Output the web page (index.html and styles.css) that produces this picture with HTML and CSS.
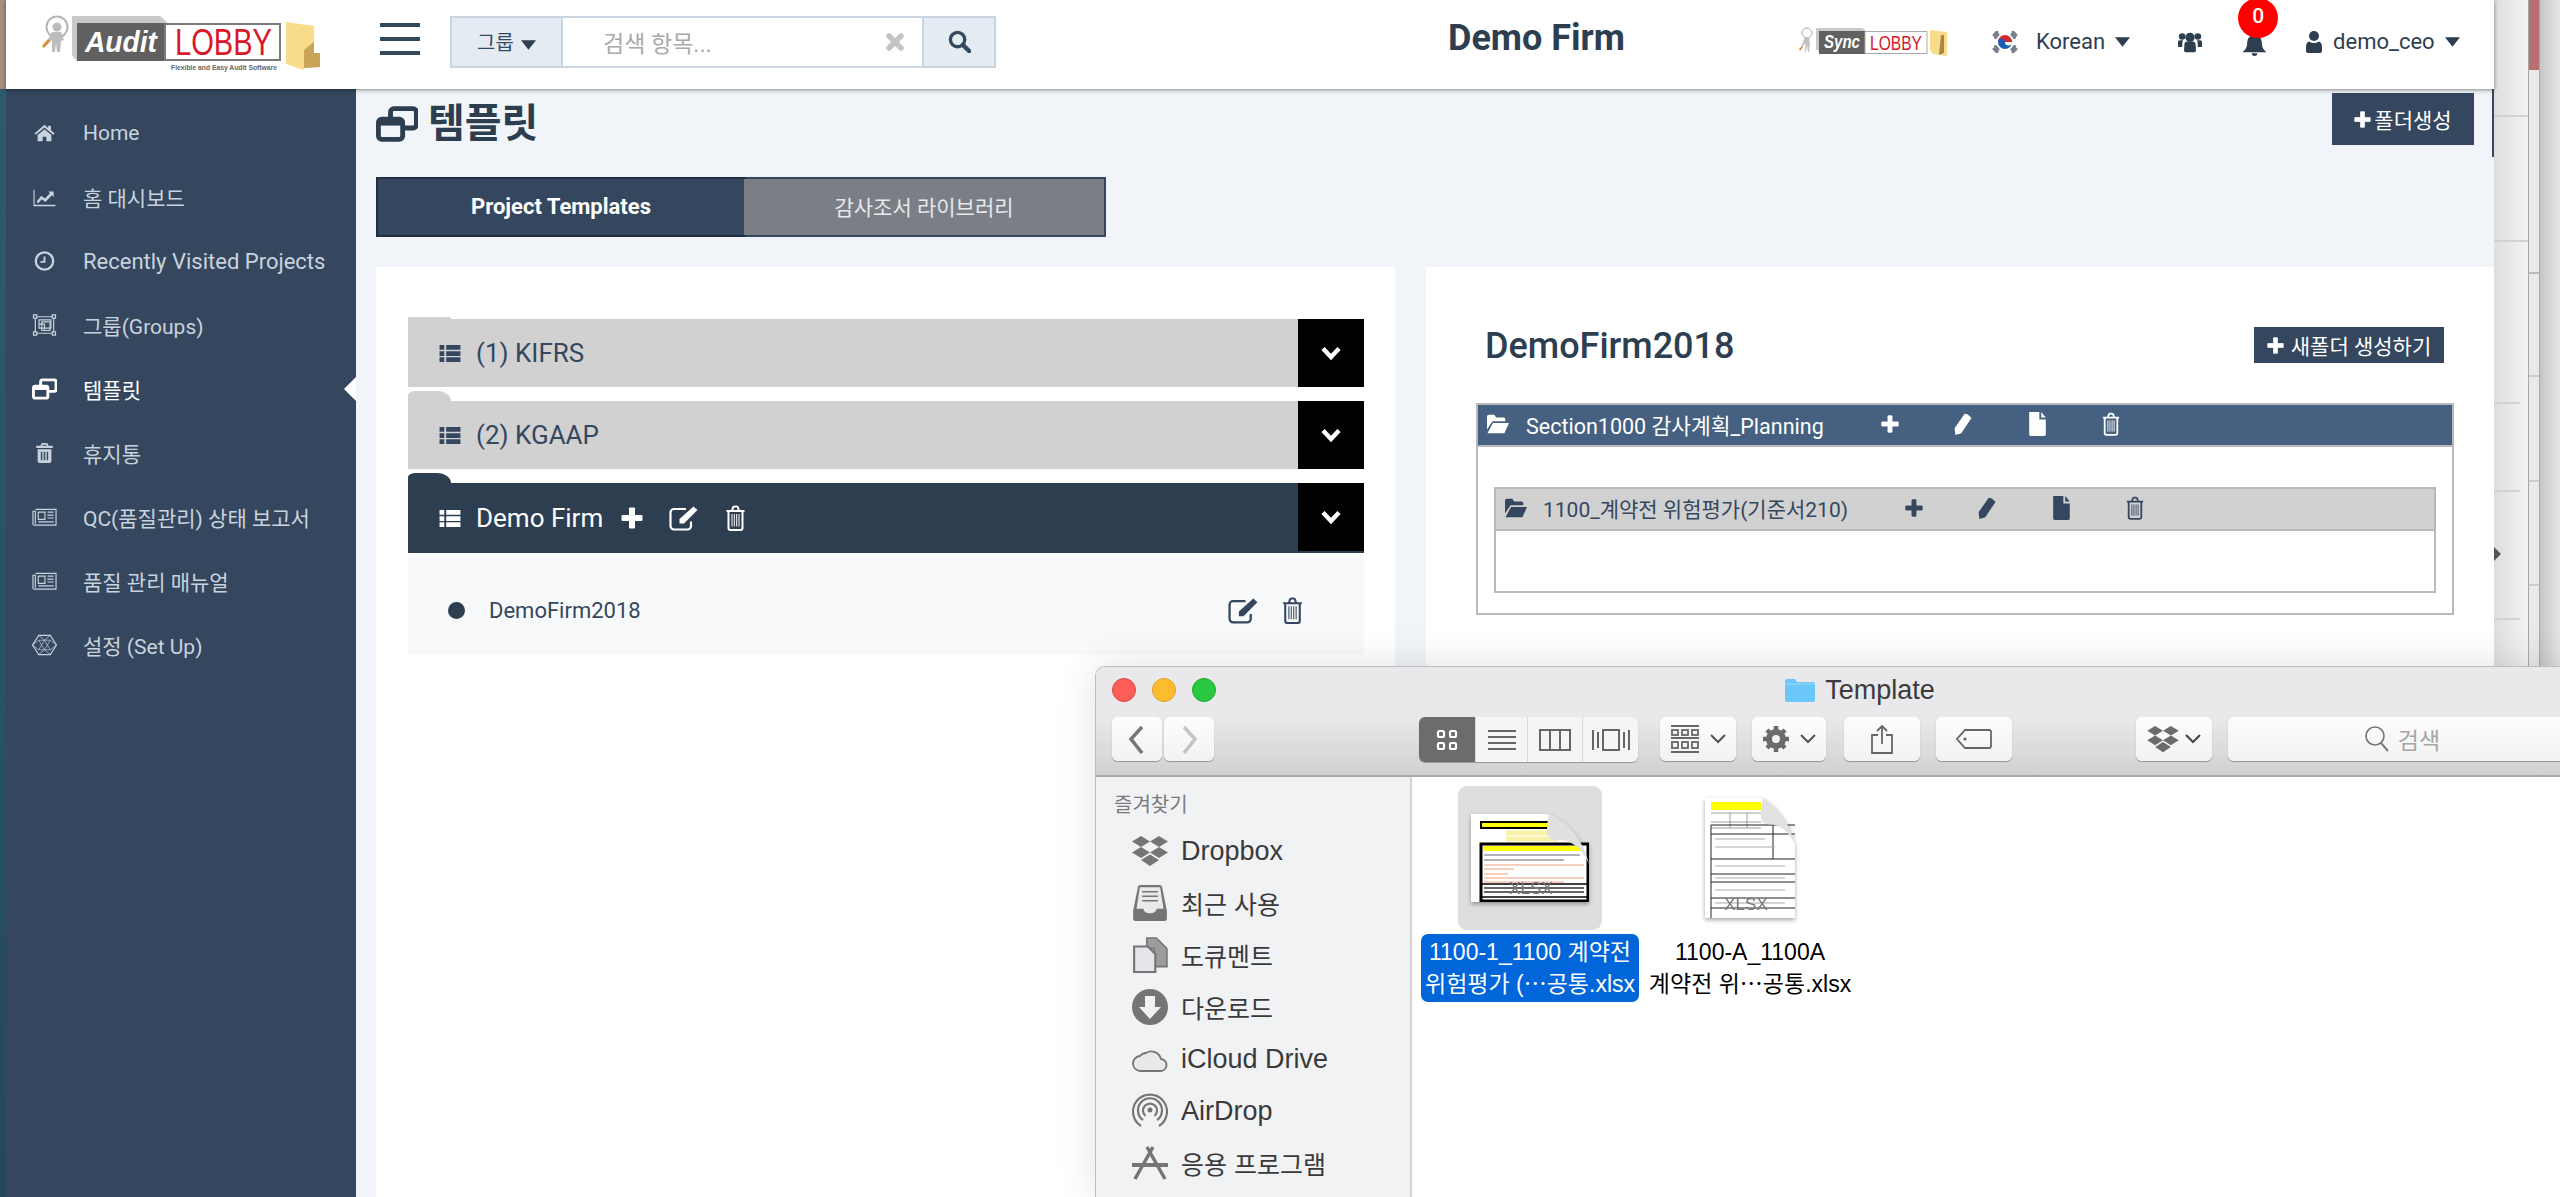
FILE: index.html
```html
<!DOCTYPE html>
<html lang="ko">
<head>
    <meta charset="UTF-8">
    <meta name="viewport" content="width=device-width, initial-scale=1.0">
    <title>Audit Lobby - 템플릿</title>
    <link rel="stylesheet" href="styles.css">
</head>
<body>
    <!-- icon sprite -->
    <svg class="sprite" xmlns="http://www.w3.org/2000/svg">
        <symbol id="i-home" viewBox="0 0 24 24"><path d="M12 3 1 12.5 2.500 14 12 6l9.500 8 1.500-1.500L19 9V4h-3v2.500zM12 8l-7.500 6.300V21H10v-5h4v5h5.500v-6.700z"/></symbol>
        <symbol id="i-chart" viewBox="0 0 24 24"><path d="M0 4h1.200v16.500H24V22H0zM3.500 17l5-6.500 4 3L18 8l-2-2h6v6l-2-2-7 7.500-4-3-4 4.500z"/></symbol>
        <symbol id="i-clock" viewBox="0 0 24 24"><circle cx="12" cy="12" r="9.500" fill="none" stroke="currentColor" stroke-width="2.500"/><path d="M12 7v6H7.500" fill="none" stroke="currentColor" stroke-width="2"/></symbol>
        <symbol id="i-group" viewBox="0 0 26 24"><g fill="none" stroke="currentColor" stroke-width="1.300"><path d="M3 3h20v18H3z"/><path d="M1 1h3.500v3.500H1zM21.500 1H25v3.500h-3.500zM1 19.500h3.500V23H1zM21.500 19.500H25V23h-3.500z" fill="#34475e"/><path d="M7 6.500h13v9H7zM7 11h6v6.500"/><path d="M10 8.500h9v9.500h-9z"/></g></symbol>
        <symbol id="i-clone" viewBox="0 0 26 22"><path d="M9 7V3.500A2 2 0 0 1 11 1.500h12a2 2 0 0 1 2 2v8a2 2 0 0 1-2 2h-6" fill="none" stroke="currentColor" stroke-width="3"/><rect x="1.500" y="8" width="15" height="12.500" rx="2" fill="none" stroke="currentColor" stroke-width="3"/><path d="M1.500 8h15v4h-15z"/></symbol>
        <symbol id="i-trash" viewBox="0 0 20 24"><path fill-rule="evenodd" d="M7 1h6l1.500 3H19v2.500H1V4h4.500zM8 3l-.6 1h5.200L12 3zM2.500 8h15v13a2 2 0 0 1-2 2h-11a2 2 0 0 1-2-2zM6 10.500V20h1.600v-9.500zM9.200 10.500V20h1.600v-9.500zM12.400 10.500V20H14v-9.500z"/></symbol>
        <symbol id="i-trash-o" viewBox="0 0 20 26"><g fill="none" stroke="currentColor"><path stroke-width="2" d="M1 6h18M6.500 6l1-3.500q.3-1 1.500-1h2q1.200 0 1.500 1l1 3.500M3 6v17a2 2 0 0 0 2 2h10a2 2 0 0 0 2-2V6"/><path stroke-width="1" d="M6.500 9v12.500M8.800 9v12.500M11.200 9v12.500M13.500 9v12.500"/></g></symbol>
        <symbol id="i-news" viewBox="0 0 26 20"><g fill="none" stroke="currentColor" stroke-width="1.200"><path d="M3.500 2H25v16.500H2.500A1.500 1.500 0 0 1 1 17V4h2.500v13"/><path d="M6.500 5h7v7.500h-7zM16 5h6.500M16 8h6.500M16 11h6.500M6.500 15h16"/></g></symbol>
        <symbol id="i-hex" viewBox="0 0 26 22"><g fill="none" stroke="currentColor" stroke-width=".7"><path stroke-width="1.100" d="M7 1h12l6.500 10L19 21H7L.5 11z"/><path d="M7 1l6 5 6-5M.5 11 7 6h12l6.500 5M7 21l6-5 6 5M.5 11 7 16h12l6.500-5M7 6l6 10 6-10M7 16l6-10 6 10"/></g></symbol>
        <symbol id="i-search" viewBox="0 0 24 24"><circle cx="10" cy="10" r="7.500" fill="none" stroke="currentColor" stroke-width="3.500"/><path d="M15.500 15.500 22 22" stroke="currentColor" stroke-width="4.500" stroke-linecap="round"/></symbol>
        <symbol id="i-times" viewBox="0 0 20 20"><path d="M4 4l12 12M16 4 4 16" stroke="currentColor" stroke-width="5.500" stroke-linecap="round"/></symbol>
        <symbol id="i-caret" viewBox="0 0 16 10"><path d="M0 0h16L8 10z"/></symbol>
        <symbol id="i-users" viewBox="0 0 26 22"><circle cx="13" cy="6" r="5"/><circle cx="4.500" cy="5" r="3.600"/><circle cx="21.500" cy="5" r="3.600"/><path d="M7 13a3 3 0 0 1 3-2.500h6a3 3 0 0 1 3 2.500l.5 7a2 2 0 0 1-2 2h-9a2 2 0 0 1-2-2zM0 11a2 2 0 0 1 2-2h3.500q-.8 1-.8 3l-.1 4.500H1a1 1 0 0 1-1-1zM26 11a2 2 0 0 0-2-2h-3.500q.8 1 .8 3l.1 4.500H25a1 1 0 0 0 1-1z"/></symbol>
        <symbol id="i-bell" viewBox="0 0 26 24"><path d="M13 1a8 8 0 0 1 8 8c0 6 2 8 5 11H0c3-3 5-5 5-11a8 8 0 0 1 8-8zM10 21h6a3 3 0 0 1-6 0z"/></symbol>
        <symbol id="i-user" viewBox="0 0 16 24"><circle cx="8" cy="6" r="5"/><path d="M3 11.500q5 3 10 0 3 1 3 5.500v4a2 2 0 0 1-2 2H2a2 2 0 0 1-2-2v-4q0-4.500 3-5.500z"/></symbol>
        <symbol id="i-plus" viewBox="0 0 22 22"><path d="M8.500 1h5v7.500H21v5h-7.500V21h-5v-7.500H1v-5h7.500z" stroke="currentColor" stroke-width="1" stroke-linejoin="round"/></symbol>
        <symbol id="i-list" viewBox="0 0 24 20"><path d="M1 1h5v5H1zM8 1h15v5H8zM1 7.500h5v5H1zM8 7.500h15v5H8zM1 14h5v5H1zM8 14h15v5H8z"/></symbol>
        <symbol id="i-chevron" viewBox="0 0 22 16"><path d="M3 3.500 11 12l8-8.500" fill="none" stroke="currentColor" stroke-width="4.500"/></symbol>
        <symbol id="i-edit" viewBox="0 0 30 26"><path d="M22 16.500V21a3.500 3.500 0 0 1-3.500 3.500H5A3.500 3.500 0 0 1 1.500 21V7.500A3.500 3.500 0 0 1 5 4h12" fill="none" stroke="currentColor" stroke-width="2.200"/><path d="M24.500 1.500 28.500 5 15 18.500H10.500V14z"/></symbol>
        <symbol id="i-folder" viewBox="0 0 26 24"><path d="M1 4a2 2 0 0 1 2-2h6l2 3h8a2 2 0 0 1 2 2v2H7L1 18zM7.500 11H25l-5 11H1.500z"/></symbol>
        <symbol id="i-pencil" viewBox="0 0 22 26"><path d="M13 1q4 0 8 5L9 24l-7 2-1-8zM2.500 19.500 7 23"/></symbol>
        <symbol id="i-file" viewBox="0 0 20 26"><path d="M1 0h11v8h7v16a2 2 0 0 1-2 2H3a2 2 0 0 1-2-2zM14 0l5 6h-5z"/></symbol>
        <symbol id="i-dropbox" viewBox="0 0 36 32"><path d="M9 1l9 5.500-9 5.500L0 6.500zM27 1l9 5.500-9 5.500-9-5.500zM9 12l9 5.500L9 23l-9-5.500zM27 12l9 5.500L27 23l-9-5.500zM18 19.500l9 5.500-9 6-9-6z"/></symbol>
    </svg>

    <div class="edge-left"></div>

    <div class="app">
        <header class="topbar">
            <svg class="logo" viewBox="0 0 290 60" width="290" height="60">
                <circle cx="17" cy="13" r="10.500" fill="#fff" stroke="#b5b5b5" stroke-width="2"/>
                <circle cx="17" cy="13" r="4.500" fill="#bdbdbd"/>
                <path d="M12 18h9l3 8-3 1-1 11h-3l-1-9-1 9h-3V26l-5 5-1-2z" fill="#bdbdbd"/>
                <path d="M2 32l6-7 2 2-6 7z" fill="#e08a2c"/>
                <path d="M32 2h88l8 7H37v38l-5-6z" fill="#c9c9c9"/>
                <path d="M37 9h88v38H37z" fill="#606060"/>
                <path d="M125 10h115v36H125z" fill="#fff" stroke="#7a7a7a" stroke-width="2"/>
                <text class="logo-audit" x="45" y="38" textLength="72" lengthAdjust="spacingAndGlyphs">Audit</text>
                <text class="logo-lobby" x="135" y="41" textLength="97" lengthAdjust="spacingAndGlyphs">LOBBY</text>
                <text class="logo-tag" x="131" y="56" textLength="106" lengthAdjust="spacingAndGlyphs">Flexible and Easy Audit Software</text>
                <path d="M246 8l28 4v27h6v14l-16 1v2l-18-6z" fill="#f9dc8a"/>
                <path d="M264 56V36l10-8v11h6v14l-16 1z" fill="#c9a458"/>
            </svg>

            <svg class="hamburger" viewBox="0 0 40 32" width="40" height="32"><path d="M0 0h40v4H0zM0 14h40v4H0zM0 28h40v4H0z"/></svg>

            <form class="search-box">
                <button type="button" class="search-group">그룹 <svg class="caret"><use href="#i-caret"/></svg></button>
                <div class="search-field">
                    <span class="placeholder">검색 항목...</span>
                    <svg class="search-clear"><use href="#i-times"/></svg>
                </div>
                <button type="button" class="search-btn"><svg><use href="#i-search"/></svg></button>
            </form>

            <div class="firm-name">Demo Firm</div>

            <svg class="sync-logo" viewBox="0 0 150 30" width="150" height="30">
                <circle cx="8" cy="6" r="5" fill="#fff" stroke="#aaa"/>
                <path d="M6 10h4l1 7-1 8H9l-1-7-1 7H6l.3-9-3 4-1-1z" fill="#c2c2c2"/>
                <path d="M0 22l3-3 1 1-3 4z" fill="#e08a2c"/>
                <path d="M17 1h46l4 3H21v21l-4-3z" fill="#c9c9c9"/>
                <path d="M20 4h46v23H20z" fill="#606060"/>
                <path d="M66 4.500h62v22H66z" fill="#fff" stroke="#aaa"/>
                <text class="sync-text" x="25" y="21" textLength="36" lengthAdjust="spacingAndGlyphs">Sync</text>
                <text class="sync-lobby" x="71" y="23" textLength="52" lengthAdjust="spacingAndGlyphs">LOBBY</text>
                <path d="M131 3l17 2v24l-14-2-3-4z" fill="#f9dc8a"/>
                <path d="M142 8h3v18l-5 2z" fill="#a78648"/>
            </svg>

            <svg class="flag" viewBox="0 0 26 22" width="26" height="22">
                <path d="M13 4a7 7 0 0 1 7 7H6a7 7 0 0 1 7-7z" fill="#d8262f"/>
                <path d="M20 11a7 7 0 0 1-14 0 3.500 3.500 0 0 1 7 0 3.500 3.500 0 0 0 7 0z" fill="#1a5fb4"/>
                <path d="M13 11a3.500 3.500 0 0 1 7 0z" fill="#d8262f"/>
                <g stroke="#77808c" stroke-width="3" stroke-linecap="round"><path d="M2 4l3-3M3.500 6.500l2.500-3M21 1l3 3M20 3.500l2.500 3M2 18l3 3M3.500 15.500l2.500 3M21 21l3-3M20 18.500l2.500-3"/></g>
            </svg>
            <span class="nav-link lang">Korean <svg class="caret"><use href="#i-caret"/></svg></span>

            <svg class="icon-users"><use href="#i-users"/></svg>
            <span class="bell-wrap">
                <svg class="icon-bell"><use href="#i-bell"/></svg>
                <span class="badge">0</span>
            </span>
            <svg class="icon-user"><use href="#i-user"/></svg>
            <span class="nav-link account">demo_ceo <svg class="caret"><use href="#i-caret"/></svg></span>
        </header>

        <div class="app-body">
            <nav class="sidenav">
                <ul>
                    <li><svg><use href="#i-home"/></svg>Home</li>
                    <li><svg><use href="#i-chart"/></svg>홈 대시보드</li>
                    <li class="wide"><svg><use href="#i-clock"/></svg>Recently Visited Projects</li>
                    <li><svg><use href="#i-group"/></svg>그룹(Groups)</li>
                    <li class="active"><svg><use href="#i-clone"/></svg>템플릿</li>
                    <li><svg><use href="#i-trash"/></svg>휴지통</li>
                    <li><svg><use href="#i-news"/></svg>QC(품질관리) 상태 보고서</li>
                    <li><svg><use href="#i-news"/></svg>품질 관리 매뉴얼</li>
                    <li><svg><use href="#i-hex"/></svg>설정 (Set Up)</li>
                </ul>
            </nav>

            <main class="main">
                <div class="page-head">
                    <h1><svg><use href="#i-clone"/></svg>템플릿</h1>
                    <button type="button" class="btn-folder"><svg><use href="#i-plus"/></svg>폴더생성</button>
                </div>

                <div class="tabs">
                    <div class="tab tab-active">Project Templates</div>
                    <div class="tab">감사조서 라이브러리</div>
                </div>

                <div class="panels">
                    <section class="panel-left">
                        <div class="acc-row acc-first">
                            <span class="acc-title"><svg class="acc-list"><use href="#i-list"/></svg>(1) KIFRS</span>
                            <span class="acc-toggle"><svg><use href="#i-chevron"/></svg></span>
                        </div>
                        <div class="acc-row">
                            <span class="acc-title"><svg class="acc-list"><use href="#i-list"/></svg>(2) KGAAP</span>
                            <span class="acc-toggle"><svg><use href="#i-chevron"/></svg></span>
                        </div>
                        <div class="acc-row acc-open">
                            <span class="acc-title"><svg class="acc-list"><use href="#i-list"/></svg>Demo Firm</span>
                            <svg class="acc-plus"><use href="#i-plus"/></svg>
                            <svg class="acc-edit"><use href="#i-edit"/></svg>
                            <svg class="acc-trash"><use href="#i-trash-o"/></svg>
                            <span class="acc-toggle"><svg><use href="#i-chevron"/></svg></span>
                        </div>
                        <div class="acc-body">
                            <span class="bullet"></span>
                            <span class="acc-item">DemoFirm2018</span>
                            <svg class="item-edit"><use href="#i-edit"/></svg>
                            <svg class="item-trash"><use href="#i-trash-o"/></svg>
                        </div>
                    </section>

                    <section class="panel-right">
                        <div class="panel-head">
                            <h2>DemoFirm2018</h2>
                            <button type="button" class="btn-new"><svg><use href="#i-plus"/></svg>새폴더 생성하기</button>
                        </div>

                        <div class="tree-box">
                            <div class="tree-bar tree-bar-blue">
                                <svg class="t-folder"><use href="#i-folder"/></svg>
                                <span class="t-name">Section1000 감사계획_Planning</span>
                                <svg class="t-plus"><use href="#i-plus"/></svg>
                                <svg class="t-pencil"><use href="#i-pencil"/></svg>
                                <svg class="t-file"><use href="#i-file"/></svg>
                                <svg class="t-trash"><use href="#i-trash-o"/></svg>
                            </div>
                            <div class="tree-inner">
                                <div class="tree-bar tree-bar-grey">
                                    <svg class="t-folder"><use href="#i-folder"/></svg>
                                    <span class="t-name">1100_계약전 위험평가(기준서210)</span>
                                    <svg class="t-plus"><use href="#i-plus"/></svg>
                                    <svg class="t-pencil"><use href="#i-pencil"/></svg>
                                    <svg class="t-file"><use href="#i-file"/></svg>
                                    <svg class="t-trash"><use href="#i-trash-o"/></svg>
                                </div>
                            </div>
                        </div>
                    </section>
                </div>
            </main>
        </div>
    </div>

    <div class="behind behind-a"><span class="behind-arrow"></span></div>
    <div class="behind behind-b"><div class="behind-red"></div></div>
    <div class="behind behind-c"></div>

    <!-- finder window floating over the browser -->
    <div class="finder">
        <div class="f-titlebar">
            <div class="f-lights"><span class="light red"></span><span class="light yellow"></span><span class="light green"></span></div>
            <div class="f-title">
                <svg viewBox="0 0 30 24" width="30" height="24"><path d="M0 3a2 2 0 0 1 2-2h8l2 3h16a2 2 0 0 1 2 2v16a2 2 0 0 1-2 2H2a2 2 0 0 1-2-2z" fill="#6bc6f9"/><path d="M0 6h30" stroke="#9bdafc"/></svg>
                Template
            </div>
        </div>
        <div class="f-toolbar">
            <div class="f-btn f-nav"><svg viewBox="0 0 50 44"><path d="M30 10 19 22l11 14" fill="none" stroke="#777" stroke-width="3.500"/></svg></div>
            <div class="f-btn f-nav f-next"><svg viewBox="0 0 50 44"><path d="M20 10l11 12-11 14" fill="none" stroke="#c4c4c4" stroke-width="3.500"/></svg></div>

            <div class="f-seg">
                <span class="seg seg-on"><svg viewBox="0 0 24 24" width="24" height="24"><g fill="none" stroke="#fff" stroke-width="2.200"><rect x="3" y="3" width="6" height="6" rx="1.500"/><rect x="15" y="3" width="6" height="6" rx="1.500"/><rect x="3" y="15" width="6" height="6" rx="1.500"/><rect x="15" y="15" width="6" height="6" rx="1.500"/></g></svg></span>
                <span class="seg seg-list"><svg viewBox="0 0 30 24" width="30" height="24"><path d="M1 3h28M1 9h28M1 15h28M1 21h28" stroke="#666" stroke-width="2"/></svg></span>
                <span class="seg seg-col"><svg viewBox="0 0 32 24" width="32" height="24"><path d="M1 2h30v20H1zM11 2v20M21 2v20" fill="none" stroke="#666" stroke-width="2"/></svg></span>
                <span class="seg seg-flow"><svg viewBox="0 0 38 24" width="38" height="24"><path d="M1 2v20M6 4v16M11 2h16v20H11zM32 4v16M37 2v20" fill="none" stroke="#666" stroke-width="2"/></svg></span>
            </div>

            <div class="f-btn f-arrange">
                <svg viewBox="0 0 30 28" width="30" height="28"><g fill="none" stroke="#666" stroke-width="1.800"><path d="M1 1h28M1 13h28M1 27h28"/><rect x="2" y="5" width="6" height="5"/><rect x="12" y="5" width="6" height="5"/><rect x="22" y="5" width="6" height="5"/><rect x="2" y="17" width="6" height="6"/><rect x="12" y="17" width="6" height="6"/><rect x="22" y="17" width="6" height="6"/></g></svg>
                <svg class="f-down" viewBox="0 0 16 10" width="16" height="10"><path d="M1 1l7 7 7-7" fill="none" stroke="#555" stroke-width="2"/></svg>
            </div>
            <div class="f-btn f-gear">
                <svg viewBox="0 0 28 28" width="28" height="28"><circle cx="14" cy="14" r="7" fill="none" stroke="#6b6b6b" stroke-width="6"/><path d="M14 1v26M1 14h26M5 5l18 18M23 5 5 23" stroke="#6b6b6b" stroke-width="4.500"/><circle cx="14" cy="14" r="4" fill="#f2f2f2"/></svg>
                <svg class="f-down" viewBox="0 0 16 10" width="16" height="10"><path d="M1 1l7 7 7-7" fill="none" stroke="#555" stroke-width="2"/></svg>
            </div>
            <div class="f-btn f-share"><svg viewBox="0 0 24 30" width="24" height="30"><path d="M8 11H2v18h20V11h-6M12 20V2M7 7l5-5 5 5" fill="none" stroke="#666" stroke-width="1.800"/></svg></div>
            <div class="f-btn f-tag"><svg viewBox="0 0 36 22" width="36" height="22"><path d="M9 2h24a2 2 0 0 1 2 2v14a2 2 0 0 1-2 2H9l-8-9z" fill="none" stroke="#666" stroke-width="1.800"/><circle cx="9" cy="11" r="1.600" fill="#666"/></svg></div>
            <div class="f-btn f-drop">
                <svg class="f-db"><use href="#i-dropbox"/></svg>
                <svg class="f-down" viewBox="0 0 16 10" width="16" height="10"><path d="M1 1l7 7 7-7" fill="none" stroke="#444" stroke-width="2"/></svg>
            </div>
            <div class="f-btn f-find">
                <svg viewBox="0 0 26 28" width="26" height="28"><circle cx="11" cy="11" r="9" fill="none" stroke="#777" stroke-width="1.700"/><path d="M17 18l7 8" stroke="#777" stroke-width="1.900"/></svg>
                검색
            </div>
        </div>

        <div class="f-body">
            <aside class="f-side">
                <div class="f-side-head">즐겨찾기</div>
                <div class="f-item f-en"><svg class="f-db"><use href="#i-dropbox"/></svg>Dropbox</div>
                <div class="f-item"><svg viewBox="0 0 32 32"><path d="M5 3a3 3 0 0 1 3-3h16a3 3 0 0 1 3 3l4 20v7a2 2 0 0 1-2 2H3a2 2 0 0 1-2-2v-7z" fill="#757575"/><path d="M7 2h18l3 19h-6q-1 4-6 4t-6-4H4z" fill="#e8e9eb"/><path d="M9 6h14M9 10h14M9 14h14" stroke="#757575" stroke-width="1.500"/></svg>최근 사용</div>
                <div class="f-item"><svg viewBox="0 0 32 34"><path d="M13 1h9l10 10v17H20V11h-7z" fill="#9c9c9c" stroke="#757575" stroke-width="1.500"/><path d="M1 9h13l7 7v17H1z" fill="#e4e5e8" stroke="#757575" stroke-width="2"/></svg>도큐멘트</div>
                <div class="f-item"><svg viewBox="0 0 36 36"><circle cx="18" cy="18" r="18" fill="#757575"/><path d="M13 7h10v11h6L18 30 7 18h6z" fill="#f1f2f4"/></svg>다운로드</div>
                <div class="f-item f-en"><svg viewBox="0 0 36 26"><path d="M9 25a7.500 7.500 0 0 1-1-15 8 8 0 0 1 6-3 10 10 0 0 1 15 6 6 6 0 0 1-1 12z" fill="#e8e9eb" stroke="#757575" stroke-width="1.800"/></svg>iCloud Drive</div>
                <div class="f-item f-en"><svg viewBox="0 0 36 36"><g fill="none" stroke="#757575" stroke-width="2.200"><path d="M9 33a17 17 0 1 1 18 0"/><path d="M11 27a12 12 0 1 1 14 0"/><path d="M13.500 23a7 7 0 1 1 9 0"/></g><circle cx="18" cy="17" r="2.500" fill="#757575"/></svg>AirDrop</div>
                <div class="f-item"><svg viewBox="0 0 36 34"><g stroke="#757575" fill="none"><path stroke-width="3.500" d="M21 1 3 33M15 1l18 32"/><path stroke-width="4" d="M0 19h36"/></g></svg>응용 프로그램</div>
            </aside>

            <div class="f-files">
                <div class="f-file">
                    <div class="f-thumb f-thumb-on">
                        <svg viewBox="0 0 118 88" width="118" height="88" class="sheet">
                            <path d="M0 0h76q26 8 42 50v38H0z" fill="#fff"/>
                            <path d="M10 8h76v6H10z" fill="#ff0" stroke="#000" stroke-width="2"/>
                            <path d="M35 19h52M35 25h52" stroke="#f7f2a8" stroke-width="5"/>
                            <path d="M10 30h107v57H10z" fill="#fff" stroke="#000" stroke-width="3"/>
                            <path d="M12 32h98v5H12z" fill="#ff0"/>
                            <g stroke="#666" stroke-width="1.200"><path d="M13 41h96M13 46h80"/></g>
                            <g stroke="#f0a080" stroke-width="1.200"><path d="M13 51h100M13 55h30M13 60h24M13 64h100M13 68h80"/></g>
                            <path d="M10 70h107M10 83h107" stroke="#000" stroke-width="1.500"/>
                            <g stroke="#333" stroke-width="1.500"><path d="M13 74h100M13 78h100"/></g>
                            <text class="sheet-text" x="60" y="80">XLSX</text>
                            <path d="M78 0q-6 26 6 26 22-2 34 24Q108 12 78 0z" fill="#e0e0e0"/>
                        </svg>
                    </div>
                    <div class="f-label f-label-on">1100-1_1100 계약전<br>위험평가 (⋯공통.xlsx</div>
                </div>
                <div class="f-file">
                    <div class="f-thumb">
                        <svg viewBox="0 0 90 120" width="90" height="120" class="sheet sheet-tall">
                            <path d="M0 0h56q22 12 34 46v74H0z" fill="#fff"/>
                            <path d="M6 4h50v8H6z" fill="#ff0"/>
                            <g stroke="#888" stroke-width=".8" fill="none"><path d="M6 15h50M6 24h50M6 30h50M25 15v15M42 15v15"/></g>
                            <path d="M6 27h84M6 27v93M68 27v34M6 36h84M6 61h84M6 76h84M6 84h84M6 100h84M6 110h84" fill="none" stroke="#222" stroke-width="1"/>
                            <g stroke="#aaa" stroke-width="1"><path d="M10 41h50M10 49h60M10 68h70M10 80h70M10 92h70M10 105h70"/></g>
                            <text class="sheet-text" x="41" y="112">XLSX</text>
                            <path d="M58 0q-6 26 4 26 20 0 28 22Q82 14 58 0z" fill="#e2e2e2"/>
                        </svg>
                    </div>
                    <div class="f-label">1100-A_1100A<br>계약전 위⋯공통.xlsx</div>
                </div>
            </div>
        </div>
    </div>
</body>
</html>
```

FILE: styles.css
```css
* {
    box-sizing: border-box;
}
html, body {
    margin: 0;
    height: 1197px;
    overflow: hidden;
}
body {
    position: relative;
    display: flex;
    width: 2560px;
    font-family: Roboto, "Noto Sans CJK KR", sans-serif;
    color: #2d3e50;
    background: #d8d8d8;
}
.sprite {
    display: none;
}
svg {
    fill: currentColor;
    flex: none;
}
ul {
    list-style: none;
    margin: 0;
    padding: 0;
}
button {
    font-family: inherit;
    border: none;
    cursor: pointer;
}

/* things behind the browser window */
.edge-left {
    width: 6px;
    flex: none;
    background: linear-gradient(to bottom, #a78f7c 0, #a78f7c 89px, #2f5a6e 89px, #24485c 100%);
}
.behind {
    position: relative;
    flex: none;
    height: 100%;
}
.behind-a {
    width: 34px;
    background:
        linear-gradient(#d2d2d2, #d2d2d2) 0 115px / 100% 2px no-repeat,
        linear-gradient(#d2d2d2, #d2d2d2) 0 240px / 100% 2px no-repeat,
        linear-gradient(#d2d2d2, #d2d2d2) 0 402px / 26px 2px no-repeat,
        linear-gradient(#d2d2d2, #d2d2d2) 0 490px / 26px 2px no-repeat,
        linear-gradient(#d2d2d2, #d2d2d2) 0 618px / 26px 2px no-repeat,
        linear-gradient(to right, #dedede, #f3f3f3);
}
.behind-arrow {
    position: absolute;
    left: 0;
    top: 547px;
    border-left: 7px solid #555;
    border-top: 7px solid transparent;
    border-bottom: 7px solid transparent;
}
.behind-b {
    width: 12px;
    border-left: 1px solid #a8a8a8;
    border-right: 1px solid #a8a8a8;
    background:
        linear-gradient(#bbb, #bbb) 0 272px / 100% 2px no-repeat,
        linear-gradient(#ccc, #ccc) 0 375px / 100% 2px no-repeat,
        linear-gradient(#ccc, #ccc) 0 480px / 100% 2px no-repeat,
        linear-gradient(#ccc, #ccc) 0 584px / 100% 2px no-repeat,
        #e9e9e9;
}
.behind-red {
    height: 70px;
    background: #b96f70;
}
.behind-c {
    flex: 1;
    background: linear-gradient(to right, #c6c6c6, #e6e6e6);
}

/* browser window */
.app {
    width: 2488px;
    flex: none;
    display: flex;
    flex-direction: column;
    height: 100%;
    background: #f1f5f9;
}
.topbar {
    position: relative;
    z-index: 2;
    height: 89px;
    flex: none;
    display: flex;
    align-items: center;
    padding-bottom: 6px;
    background: #fff;
    box-shadow: 0 1px 4px rgba(0, 0, 0, 0.45);
}
.logo {
    margin: 5px 0 0 34px;
}
.logo-audit {
    font: italic 700 30px "Liberation Sans", sans-serif;
    fill: #fff;
}
.logo-lobby {
    font: 400 36px "Liberation Sans", sans-serif;
    fill: #d9182a;
}
.logo-tag {
    font: 700 8px "Liberation Sans", sans-serif;
    fill: #666;
}
.hamburger {
    margin: 0 0 5px 50px;
    color: #34495e;
}
.search-box {
    display: flex;
    height: 52px;
    width: 546px;
    margin: 0 0 0 30px;
    border: 2px solid #c9d6e2;
}
.search-group {
    width: 111px;
    background: #e5ebf2;
    border-right: 2px solid #c9d6e2;
    color: #34495e;
    font-size: 20px;
    padding: 0;
}
.caret {
    width: 15px;
    height: 10px;
    color: #2d3e50;
    margin-left: 2px;
}
.search-field {
    flex: 1;
    display: flex;
    align-items: center;
    padding-left: 40px;
    justify-content: space-between;
}
.placeholder {
    color: #a9a9a9;
    font-size: 23px;
}
.search-clear {
    width: 20px;
    height: 20px;
    color: #c4c4c4;
    margin-right: 17px;
}
.search-btn {
    width: 72px;
    background: #e5ebf2;
    border-left: 2px solid #c9d6e2;
    color: #34495e;
    padding: 0;
    display: flex;
    align-items: center;
    justify-content: center;
}
.search-btn svg {
    width: 23px;
    height: 23px;
}
.firm-name {
    margin: 0 0 7px 452px;
    width: 351px;
    font-size: 36px;
    font-weight: 700;
    color: #2d3e50;
}
.sync-text {
    font: italic 700 18px "Liberation Sans", sans-serif;
    fill: #fff;
}
.sync-lobby {
    font: 400 21px "Liberation Sans", sans-serif;
    fill: #d9182a;
}
.flag {
    margin-left: 43px;
}
.nav-link {
    font-size: 22px;
    color: #2d3e50;
    display: flex;
    align-items: center;
}
.nav-link .caret {
    margin-left: 10px;
}
.lang {
    margin-left: 18px;
}
.icon-users {
    width: 24px;
    height: 22px;
    margin-left: 48px;
}
.bell-wrap {
    position: relative;
    margin-left: 39px;
    width: 27px;
    height: 22px;
    margin-top: 6px;
}
.icon-bell {
    width: 27px;
    height: 22px;
}
.badge {
    position: absolute;
    left: -3px;
    top: -36px;
    width: 40px;
    height: 40px;
    border-radius: 50%;
    background: #f00;
    color: #fff;
    font-size: 21px;
    font-weight: 500;
    text-align: center;
    line-height: 36px;
}
.icon-user {
    width: 16px;
    height: 24px;
    margin-left: 38px;
}
.account {
    margin-left: 11px;
}

.app-body {
    flex: 1;
    display: flex;
    min-height: 0;
}

/* left menu */
.sidenav {
    width: 350px;
    flex: none;
    background: #34475e;
    padding-top: 12px;
}
.sidenav li {
    position: relative;
    height: 64px;
    display: flex;
    align-items: center;
    padding-left: 26px;
    font-size: 21px;
    color: #c9d3dd;
}
.sidenav li.wide {
    font-size: 22px;
}
.sidenav li svg {
    width: 25px;
    height: 22px;
    margin-right: 26px;
}
.sidenav li.active {
    color: #fff;
}
.sidenav li.active::after {
    content: "";
    position: absolute;
    right: 0;
    top: 20px;
    border-right: 12px solid #fff;
    border-top: 12px solid transparent;
    border-bottom: 12px solid transparent;
}

/* main */
.main {
    position: relative;
    flex: 1;
    min-width: 0;
    display: flex;
    flex-direction: column;
    padding-left: 20px;
}
.main::after {
    content: "";
    position: absolute;
    right: 0;
    top: 0;
    width: 2px;
    height: 68px;
    background: #34475e;
}
.page-head {
    height: 88px;
    flex: none;
    display: flex;
    justify-content: space-between;
    align-items: flex-start;
    padding: 4px 20px 0 0;
}
.page-head h1 {
    margin: 9px 0 0;
    display: flex;
    align-items: center;
    font-size: 40px;
    font-weight: 700;
    color: #2d3e50;
    line-height: 44px;
}
.page-head h1 svg {
    width: 42px;
    height: 36px;
    margin-right: 10px;
}
.btn-folder {
    width: 142px;
    height: 52px;
    background: #34475e;
    color: #fff;
    font-size: 21px;
    padding: 0;
    display: flex;
    align-items: center;
    justify-content: center;
}
.btn-folder svg {
    width: 17px;
    height: 17px;
    margin-right: 3px;
}
.tabs {
    display: flex;
    width: 730px;
    height: 60px;
    flex: none;
    border: 2px solid #34475e;
}
.tab {
    flex: 1;
    display: flex;
    align-items: center;
    justify-content: center;
    background: #7a7f87;
    color: #e8e8e8;
    font-size: 21px;
    padding-bottom: 2px;
}
.tab-active {
    flex: none;
    width: 366px;
    background: #34475e;
    color: #fff;
    font-size: 22px;
    font-weight: 700;
    outline: 2px solid #1f2f40;
}
.panels {
    flex: 1;
    display: flex;
    gap: 31px;
    margin-top: 30px;
}

/* left panel, accordion */
.panel-left {
    width: 1019px;
    flex: none;
    background: #fff;
    padding: 52px 31px 0 32px;
}
.acc-row {
    position: relative;
    display: flex;
    align-items: center;
    height: 68px;
    margin-bottom: 14px;
    background: #d1d1d1;
    color: #34475e;
}
.acc-row::before {
    content: "";
    position: absolute;
    left: 0;
    top: -10px;
    width: 43px;
    height: 10px;
    background: inherit;
    border-top-right-radius: 14px 10px;
    border-top-left-radius: 8px 4px;
}
.acc-first::before {
    top: -2px;
    height: 2px;
}
.acc-title {
    display: flex;
    align-items: center;
    font-size: 26px;
    padding-left: 30px;
}
.acc-list {
    width: 24px;
    height: 19px;
    margin-right: 14px;
}
.acc-toggle {
    margin-left: auto;
    width: 66px;
    height: 68px;
    flex: none;
    background: #000;
    color: #fff;
    display: flex;
    align-items: center;
    justify-content: center;
    align-self: flex-start;
}
.acc-toggle svg {
    width: 22px;
    height: 16px;
}
.acc-open {
    height: 70px;
    margin-bottom: 0;
    background: #2d3e50;
    color: #fff;
}
.acc-plus {
    width: 22px;
    height: 22px;
    margin-left: 18px;
}
.acc-edit {
    width: 30px;
    height: 26px;
    margin-left: 26px;
}
.acc-trash {
    width: 23px;
    height: 26px;
    margin-left: 25px;
}
.acc-body {
    display: flex;
    align-items: center;
    height: 102px;
    background: #f8f9fb;
    color: #34475e;
    padding: 12px 60px 0 40px;
}
.bullet {
    width: 17px;
    height: 17px;
    border-radius: 50%;
    background: #2d3e50;
}
.acc-item {
    font-size: 22px;
    margin-left: 24px;
    margin-right: auto;
}
.item-edit {
    width: 31px;
    height: 27px;
}
.item-trash {
    width: 23px;
    height: 27px;
    margin-left: 22px;
}

/* right panel, tree */
.panel-right {
    flex: 1;
    min-width: 0;
    background: #fff;
    padding: 60px 40px 0 50px;
}
.panel-head {
    height: 76px;
    display: flex;
    justify-content: space-between;
    align-items: flex-start;
    padding: 0 10px 0 9px;
}
.panel-head h2 {
    margin: -2px 0 0;
    font-size: 36px;
    font-weight: 500;
    line-height: 42px;
    color: #2d3e50;
}
.btn-new {
    width: 190px;
    height: 36px;
    background: #34475e;
    color: #fff;
    font-size: 21px;
    padding: 0;
    display: flex;
    align-items: center;
    justify-content: center;
}
.btn-new svg {
    width: 17px;
    height: 17px;
    margin-right: 7px;
}
.tree-box {
    width: 978px;
    height: 212px;
    border: 2px solid #b9b9b9;
}
.tree-bar {
    display: flex;
    align-items: center;
    height: 42px;
    padding-bottom: 2px;
    border-bottom: 2px solid #b9b9b9;
}
.tree-bar-blue {
    background: #456080;
    color: #fff;
}
.tree-bar-grey {
    background: #d1d1d1;
    color: #34475e;
}
.t-folder {
    width: 24px;
    height: 22px;
    margin-left: 8px;
}
.t-name {
    width: 355px;
    margin-left: 16px;
    font-size: 21.5px;
    white-space: nowrap;
}
.t-plus {
    width: 18px;
    height: 18px;
}
.t-pencil {
    width: 20px;
    height: 22px;
    margin-left: 54px;
}
.t-file {
    width: 19px;
    height: 24px;
    margin-left: 55px;
}
.t-trash {
    width: 18px;
    height: 24px;
    margin-left: 55px;
}
.tree-inner {
    width: 942px;
    height: 106px;
    margin: 40px 0 0 16px;
    border: 2px solid #b9b9b9;
}
.tree-inner .t-name {
    margin-left: 15px;
    width: 362px;
    font-size: 21px;
}

/* finder */
.finder {
    position: absolute;
    left: 1095px;
    top: 666px;
    width: 1530px;
    height: 531px;
    display: flex;
    flex-direction: column;
    border-radius: 10px 10px 0 0;
    border: 1px solid #bdbdbd;
    border-bottom: none;
    background: #fff;
    box-shadow: 0 0 40px rgba(0, 0, 0, 0.12);
    font-family: "Liberation Sans", "Noto Sans CJK KR", sans-serif;
    overflow: hidden;
}
.f-titlebar {
    height: 50px;
    flex: none;
    display: grid;
    grid-template-columns: 1fr auto 1fr;
    align-items: center;
    background: #e9e8ea;
    padding: 0 0 4px 16px;
}
.f-lights {
    display: flex;
    gap: 16px;
}
.light {
    width: 24px;
    height: 24px;
    border-radius: 50%;
}
.red { background: #fc5f57; border: 1px solid #e0443e; }
.yellow { background: #fdbc2e; border: 1px solid #dea123; }
.green { background: #28c840; border: 1px solid #1aab29; }
.f-title {
    display: flex;
    align-items: center;
    gap: 10px;
    font-size: 27px;
    color: #3c3a3d;
    margin-right: 16px;
}
.f-toolbar {
    height: 60px;
    flex: none;
    display: flex;
    align-items: flex-start;
    padding-left: 16px;
    background: linear-gradient(to bottom, #e9e8ea, #d2d0d3);
    border-bottom: 2px solid #a9a9a9;
}
.f-btn {
    height: 44px;
    display: flex;
    align-items: center;
    justify-content: center;
    background: linear-gradient(to bottom, #fdfdfd, #f2f2f2);
    border-radius: 6px;
    box-shadow: 0 1px 1px rgba(0, 0, 0, 0.3);
}
.f-nav {
    width: 50px;
}
.f-nav svg {
    width: 50px;
    height: 44px;
}
.f-next {
    margin-left: 2px;
}
.f-seg {
    margin-left: 205px;
    width: 219px;
    height: 45px;
    display: flex;
    border-radius: 6px;
    overflow: hidden;
    background: #f5f5f5;
    box-shadow: 0 1px 1px rgba(0, 0, 0, 0.3);
}
.seg {
    display: flex;
    align-items: center;
    justify-content: center;
    border-right: 1px solid #d8d8d8;
}
.seg-on { width: 57px; background: #6c6c6c; }
.seg-list { width: 52px; }
.seg-col { width: 55px; }
.seg-flow { width: 55px; border-right: none; }
.f-down {
    margin-left: 10px;
}
.f-arrange { width: 76px; margin-left: 22px; }
.f-gear { width: 74px; margin-left: 16px; }
.f-share { width: 76px; margin-left: 18px; }
.f-tag { width: 76px; margin-left: 16px; }
.f-drop { width: 76px; margin-left: 124px; }
.f-drop .f-db {
    width: 32px;
    height: 28px;
    color: #6c6c6c;
}
.f-drop .f-down {
    margin-left: 6px;
}
.f-find {
    width: 348px;
    margin-left: 16px;
    gap: 8px;
    font-size: 23px;
    color: #a6a6a6;
}
.f-body {
    flex: 1;
    display: flex;
    min-height: 0;
}
.f-side {
    width: 316px;
    flex: none;
    background: #f1f2f4;
    border-right: 2px solid #d4d4d4;
    padding: 14px 0 0 18px;
}
.f-side-head {
    font-size: 20px;
    line-height: 28px;
    color: #7a7a7a;
    margin-bottom: 6px;
}
.f-item {
    height: 52px;
    display: flex;
    align-items: center;
    font-size: 25px;
    color: #3a3a3c;
}
.f-en {
    font-size: 27px;
}
.f-item svg {
    width: 36px;
    height: 36px;
    margin: 0 13px 0 18px;
    color: #757575;
}
.f-files {
    flex: 1;
    display: flex;
    padding: 9px 0 0 8px;
}
.f-file {
    width: 220px;
    display: flex;
    flex-direction: column;
    align-items: center;
}
.f-thumb {
    width: 144px;
    height: 144px;
    border-radius: 9px;
    display: flex;
    align-items: center;
    justify-content: center;
}
.f-thumb-on {
    background: #dedede;
}
.sheet {
    filter: drop-shadow(0 2px 2px rgba(0, 0, 0, 0.35));
}
.sheet-text {
    font: 400 17px "Liberation Sans", sans-serif;
    fill: #777;
    text-anchor: middle;
}
.f-label {
    margin-top: 4px;
    padding: 2px 0;
    width: 218px;
    font-size: 23px;
    line-height: 32px;
    text-align: center;
    color: #000;
    white-space: nowrap;
}
.f-label-on {
    background: #0066d9;
    color: #fff;
    border-radius: 7px;
}
```
